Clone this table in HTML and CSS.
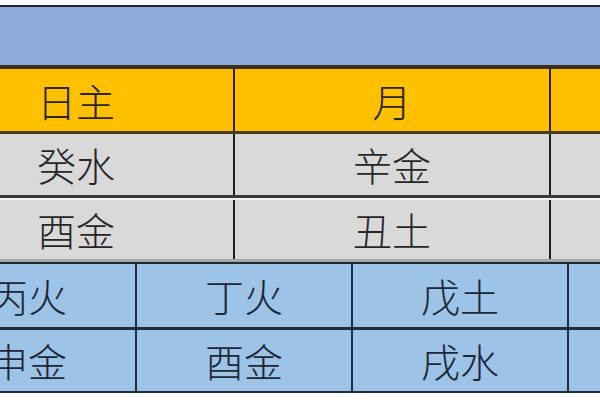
FILE: index.html
```html
<!DOCTYPE html>
<html lang="zh">
<head>
<meta charset="utf-8">
<link rel="stylesheet" href="styles.css">
</head>
<body>
<div class="page">
  <div class="top">
    <div class="title"></div>
    <div class="row head">
      <div class="cell">日主</div>
      <div class="cell">月</div>
      <div class="cell"></div>
      <div class="cell"></div>
    </div>
    <div class="row gray first">
      <div class="cell">癸水</div>
      <div class="cell">辛金</div>
      <div class="cell"></div>
      <div class="cell"></div>
    </div>
    <div class="row gray second">
      <div class="cell">酉金</div>
      <div class="cell">丑土</div>
      <div class="cell"></div>
      <div class="cell"></div>
    </div>
  </div>
  <div class="bottom">
    <div class="row blue first">
      <div class="cell">丙火</div>
      <div class="cell">丁火</div>
      <div class="cell">戊土</div>
      <div class="cell"></div>
    </div>
    <div class="row blue second">
      <div class="cell">申金</div>
      <div class="cell">酉金</div>
      <div class="cell">戌水</div>
      <div class="cell"></div>
    </div>
  </div>
</div>
</body>
</html>
```
FILE: styles.css
```css
html, body {
  margin: 0;
  padding: 0;
  background: #ffffff;
  overflow: hidden;
}
.page {
  width: 600px;
  height: 400px;
  overflow: hidden;
  padding-top: 5px;
  box-sizing: border-box;
  font-family: "Noto Sans CJK SC", "Noto Sans CJK JP", sans-serif;
  font-weight: 300;
  font-size: 39px;
}
.top {
  margin-left: -81px;
  width: 1400px;
}
.title {
  height: 58px;
  background: #8eaadb;
  border-top: 2px solid #1e2836;
  border-bottom: 4px solid #3a3020;
}
.row {
  display: flex;
}
.cell {
  box-sizing: border-box;
  border-right: 2px solid #1f1f1f;
  display: flex;
  align-items: center;
  justify-content: center;
  line-height: 1;
  flex: none;
}
.top .cell {
  width: 316px;
  color: #262626;
}
.head {
  height: 62px;
  background: #ffc000;
  border-bottom: 3px solid #4a3a10;
}
.head .cell {
  border-right-color: #2a2010;
}
.gray {
  background: #d9d9d9;
}
.gray.first {
  height: 61px;
  border-bottom: 3px solid #3a3a3a;
}
.gray.second {
  height: 59px;
  border-top: 2px solid #f2f2f2;
  border-bottom: 3px solid #a8a8a8;
}
.bottom {
  margin-left: -79px;
  width: 1400px;
  border-top: 2px solid #1c2a3a;
}
.bottom .cell {
  width: 216px;
  color: #1b2638;
  border-right-color: #1c2e44;
}
.blue {
  background: #9dc3e6;
}
.blue.first {
  height: 63px;
  border-bottom: 3px solid #1e2c3c;
}
.blue.second {
  height: 61px;
  border-bottom: 2px solid #1e2c3c;
}
```
